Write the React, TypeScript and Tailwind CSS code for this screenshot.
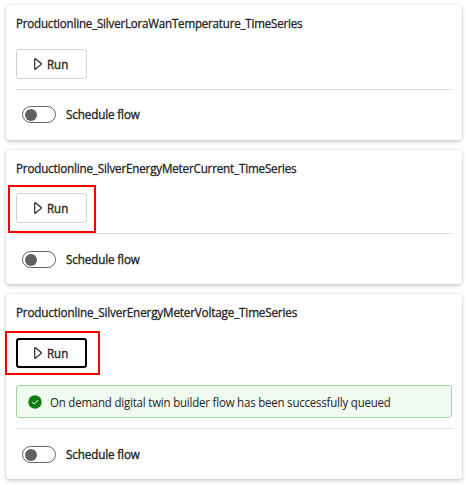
import React from 'react';

type FlowCardProps = {
  title: string;
  titleClass: string;
  cardClass: string;
  runClass: string;
  buttonClass: string;
  scheduleClass: string;
  highlightClass?: string;
  message?: string;
};

function PlayIcon() {
  return (
    <svg width="8" height="12" viewBox="0 0 8 12" fill="none" className="shrink-0">
      <path d="M.7 1.2v9.6c0 .4.4.6.7.4l5.8-4.8c.3-.3.3-.6 0-.9L1.4.8C1.1.6.7.8.7 1.2Z" stroke="#242424" strokeWidth="1.2" />
    </svg>
  );
}

function SuccessIcon() {
  return (
    <svg width="14" height="14" viewBox="0 0 14 14" className="shrink-0">
      <circle cx="7" cy="7" r="6.7" fill="#107c10" />
      <path d="m4.2 7.1 2 1.9 3.6-3.7" fill="none" stroke="#f1faf1" strokeWidth="1" strokeLinecap="round" strokeLinejoin="round" />
    </svg>
  );
}

function Toggle() {
  return (
    <button className="flex h-[17px] w-[34px] items-center rounded-full border border-[#616161] bg-white pl-[2px]" aria-label="Schedule flow">
      <span className="size-3 rounded-full bg-[#616161]" />
    </button>
  );
}

function FlowCard({ title, titleClass, cardClass, runClass, buttonClass, scheduleClass, highlightClass, message }: FlowCardProps) {
  return (
    <section className={`flex flex-col rounded bg-white px-2.5 pt-2.5 shadow-[0_0_2px_rgba(0,0,0,0.16),0_2px_4px_rgba(0,0,0,0.18)] ${cardClass}`}>
      <h2 className={`h-[18px] origin-left whitespace-nowrap text-[12px] leading-[18px] tracking-[-0.2px] [-webkit-text-stroke:0.3px_#242424] ${titleClass}`}>{title}</h2>
      <div className={`relative flex ${runClass}`}>
        <button className={`flex h-[30px] w-[71px] items-center rounded-[3px] bg-white ${buttonClass}`}>
          <PlayIcon />
          <span className="ml-[5px] origin-left scale-x-[0.96] pt-px text-[12px] leading-4 [-webkit-text-stroke:0.35px_#242424]">Run</span>
        </button>
        {highlightClass && <span className={`pointer-events-none absolute border-2 border-[#fa0000] ${highlightClass}`} />}
      </div>
      {message && (
        <div className="mt-[17px] flex h-[33px] items-center gap-2 rounded-[3px] border border-[#9fd89f] bg-[#f1faf1] pl-[11px]">
          <SuccessIcon />
          <span className="origin-left scale-x-[0.955] whitespace-nowrap pt-0.5 text-[12px] leading-4 tracking-[-0.2px]">{message}</span>
        </div>
      )}
      <div className="mt-2.5 h-px shrink-0 bg-[#e0e0e0]" />
      <div className={`mt-auto flex h-[17px] items-center gap-2.5 pl-1.5 ${scheduleClass}`}>
        <Toggle />
        <span className="origin-left scale-x-[0.974] whitespace-nowrap pt-px text-[12px] leading-4 tracking-[-0.15px] [-webkit-text-stroke:0.35px_#242424]">Schedule flow</span>
      </div>
    </section>
  );
}

export default function App() {
  return (
    <main className="flex h-[485px] w-[466px] flex-col gap-2.5 overflow-hidden bg-white pt-[5px] pr-1 pl-1.5 font-['Open_Sans','Noto_Sans',sans-serif] text-[#242424]">
      <FlowCard
        title="Productionline_SilverLoraWanTemperature_TimeSeries"
        titleClass="scale-x-[0.963]"
        cardClass="h-[135px]"
        runClass="mt-4"
        buttonClass="border border-[#d1d1d1] pl-[17px]"
        scheduleClass="mb-[17px]"
      />
      <FlowCard
        title="Productionline_SilverEnergyMeterCurrent_TimeSeries"
        titleClass="scale-x-[0.972]"
        cardClass="h-[134px]"
        runClass="mt-[15px]"
        buttonClass="border border-[#d1d1d1] pl-[17px]"
        scheduleClass="mb-4"
        highlightClass="top-[-8px] left-[-8px] h-12 w-[88px]"
      />
      <FlowCard
        title="Productionline_SilverEnergyMeterVoltage_TimeSeries"
        titleClass="scale-x-[0.979]"
        cardClass="h-[185px]"
        runClass="mt-4"
        buttonClass="border-2 border-black pl-4"
        scheduleClass="mb-4"
        highlightClass="top-[-7px] left-[-11px] h-11 w-[95px]"
        message="On demand digital twin builder flow has been successfully queued"
      />
    </main>
  );
}
